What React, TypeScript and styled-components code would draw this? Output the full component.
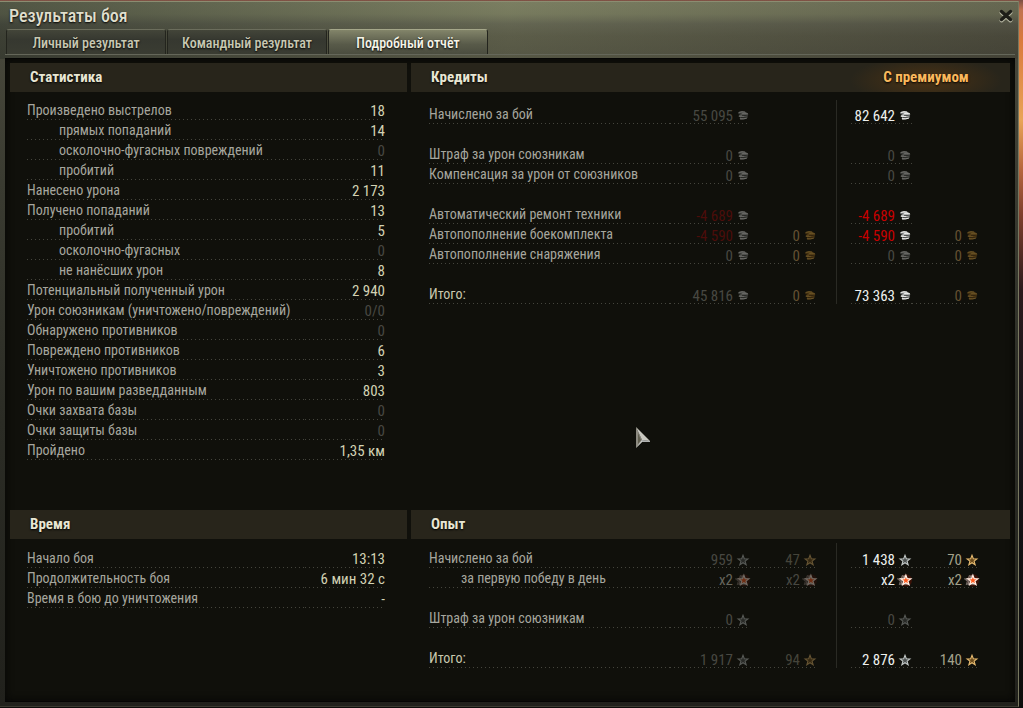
import React from 'react';
import styled, { createGlobalStyle, css } from 'styled-components';

const GlobalStyle = createGlobalStyle`
  * { box-sizing: border-box; }
  body {
    margin: 0;
    background: linear-gradient(180deg, #7b5044 0, #c07350 10px, #d97a3d 40px, #e9a457 120px, #b5653c 170px, #7d3f2c 215px, #2b1a1c 290px, #17151a 420px, #0d0d0b 100%);
    font-family: "Roboto Condensed", "Liberation Sans Narrow", "Roboto", sans-serif;
    font-size: 15px;
    color: #a3a39b;
  }
  h1, h2 { margin: 0; }
`;

const Window = styled.main`
  position: relative;
  display: flex;
  flex-direction: column;
  min-height: calc(100vh - 2px);
  margin: 1px 4px 1px 0;
  padding: 0 3px 4px 5px;
  border-top: 1px solid #8b8d71;
  border-right: 1px solid #77775f;
  border-bottom: 1px solid #3b3b31;
  background:
    linear-gradient(90deg, rgba(40, 46, 38, 0.45) 0, rgba(150, 155, 112, 0.2) 50%, rgba(60, 56, 44, 0.25) 100%) 0 0 / 100% 57px no-repeat,
    linear-gradient(180deg, #74775e 0, #6f7259 12px, #57584a 22px, #4d4d3f 34px, #46463a 56px, #3a3b31 180px, #2b2c25 420px, #21211c 100%);
`;

const TitleBar = styled.header`
  display: flex;
  align-items: center;
  justify-content: space-between;
  height: 27px;
  padding: 0 1px 0 4px;
`;

const Title = styled.h1`
  font-size: 18px;
  line-height: 28px;
  font-weight: 500;
  color: #e0dfcd;
  text-shadow: 0 1px 2px #000;
`;

const CloseButton = styled.button`
  display: flex;
  padding: 0;
  border: 0;
  background: none;
  cursor: pointer;
`;

const Tabs = styled.div`
  display: flex;
  gap: 1px;
  height: 26px;
  padding-left: 1px;
  border-bottom: 1px solid #65675a;
`;

const Tab = styled.button<{ $active?: boolean }>`
  width: 160px;
  height: 25px;
  padding: 2px 0 0;
  border: 1px solid #23241d;
  border-top-color: #6b6d5c;
  border-bottom: 0;
  border-radius: 3px 3px 0 0;
  font: inherit;
  font-size: 14px;
  font-weight: 500;
  color: #c8c8b2;
  text-shadow: 0 1px 2px #000;
  background: linear-gradient(180deg, #434539 0, #363830 40%, #3a3c32 100%);
  ${(p) => p.$active && css`
    color: #f6f5e8;
    border-top-color: #a5a78a;
    background: linear-gradient(180deg, #83856a 0, #7b7d64 10%, #585a49 60%, #4b4d3f 100%);
  `}
`;

const Report = styled.div`
  display: grid;
  flex: 1;
  grid-template-columns: minmax(0, 397fr) minmax(0, 599fr);
  grid-template-rows: auto 1fr;
  gap: 50px 4px;
  margin-top: 3px;
  padding: 4px 5px;
  border: 1px solid #050504;
  border-width: 1px 0 1px 0;
  background: #10100b;
  box-shadow: inset 0 0 8px #050504;
`;

const Section = styled.section`
  min-width: 0;
`;

const SectionHeader = styled.div`
  display: flex;
  justify-content: space-between;
  height: 29px;
  padding-left: 20px;
  background: #28251b;
`;

const SectionTitle = styled.h2`
  font-size: 15px;
  line-height: 28px;
  font-weight: 700;
  color: #e8e6d3;
  text-shadow: 0 1px 2px #000;
`;

const PremiumTitle = styled.strong`
  width: 168px;
  font-size: 15px;
  line-height: 28px;
  text-align: center;
  color: #fbb95c;
  text-shadow: 0 1px 2px #000;
  background: radial-gradient(ellipse 76px 24px at 50% 60%, #4a3214 0, rgba(74, 50, 20, 0) 100%);
`;

const StatBody = styled.div<{ $top: number }>`
  padding: ${(p) => p.$top}px 22px 0 17px;
`;

const IncomeBody = styled.div<{ $top: number }>`
  padding: ${(p) => p.$top}px 31px 0 18px;
`;

const Table = styled.table`
  width: 100%;
  border-collapse: collapse;
  table-layout: fixed;
`;

const dots = css`
  background: linear-gradient(90deg, #45453d 1px, transparent 1px) 0 100% / 4px 1px repeat-x;
`;

const Row = styled.tr<{ $height?: number }>`
  height: ${(p) => p.$height ?? 20}px;
`;

const Label = styled.th<{ $indent?: boolean; $total?: boolean }>`
  ${dots}
  padding: 0 0 1px ${(p) => (p.$indent ? 32 : 0)}px;
  font-size: 14px;
  line-height: 18px;
  font-weight: 400;
  text-align: left;
  vertical-align: bottom;
  white-space: nowrap;
  color: ${(p) => (p.$total ? '#c9c8ae' : '#a6a69e')};
`;

const tones = {
  cream: '#d3d2b3',
  off: '#484842',
  white: '#eef0ee',
  red: '#c80000',
  redOff: '#4c0d0a',
  goldOff: '#645031',
  goldFaint: '#45443a',
  bonusOff: '#66665d',
  gold: '#a3a18a',
};
type Tone = keyof typeof tones;

const Value = styled.td<{ $tone: Tone; $low?: boolean }>`
  ${dots}
  padding: 0;
  line-height: ${(p) => (p.$low ? 16 : 18)}px;
  text-align: right;
  vertical-align: bottom;
  white-space: nowrap;
  color: ${(p) => tones[p.$tone]};
`;

const Blank = styled.td`
  padding: 0;
`;

const Divider = styled.td`
  padding: 0;
  background: linear-gradient(#2a2a24, #2a2a24) 19px 0 / 1px 100% no-repeat;
`;

const Icon = styled.svg<{ $dim?: boolean }>`
  width: 14px;
  height: 14px;
  margin-left: 3px;
  vertical-align: -2px;
  overflow: visible;
  opacity: ${(p) => (p.$dim ? 0.4 : 1)};
`;

const Cursor = styled.svg`
  position: absolute;
  left: 636px;
  top: 425px;
  pointer-events: none;
`;

type IconKind = 'silver' | 'goldCoin' | 'star' | 'goldStar' | 'bonus';
const STAR = 'M8 1.6 9.5 5.5 13.7 5.7 10.4 8.3 11.6 12.4 8 10.1 4.4 12.4 5.6 8.3 2.3 5.7 6.5 5.5Z';

function Glyph({ kind, dim }: { kind: IconKind; dim?: boolean }) {
  if (kind === 'silver' || kind === 'goldCoin') {
    const gold = kind === 'goldCoin';
    const light = gold ? '#f0b850' : '#f4f4f2';
    const mid = gold ? '#b98228' : '#b4b7b6';
    return (
      <Icon viewBox="1 0 14 14" $dim={dim} aria-hidden="true">
        <path d="M3.4 3.2Q6.5 2 9.6 2.6L12.8 4.2Q13.8 5.6 12.6 6.8L12.4 8.8Q10.5 10.6 5.4 10.4L4.6 9.2 5.8 8 3.6 7.2 5 5.6 3.2 4.4Z" fill={mid} />
        <path d="M3.8 3.4Q7 2 10.2 3.2M6.4 5Q9.6 3.8 13 5.1M3.8 7.2Q6 7.6 9 7.2M5 9.8Q9 10.4 12 9" fill="none" stroke={light} strokeWidth="1" />
        <path d="M3.4 4.9H6.6M7 6.3Q10 6.9 13 6M5.8 8.5Q9 9 12.6 7.8" fill="none" stroke={gold ? '#5a380e' : '#3d3f3e'} strokeWidth="0.9" />
      </Icon>
    );
  }
  if (kind === 'bonus') {
    return (
      <Icon viewBox="0 -1 16 16" $dim={dim} aria-hidden="true">
        <circle cx="9" cy="7.5" r="7" fill="#a01800" opacity="0.3" />
        <path d={STAR} transform="translate(-3 0)" fill="#46302b" stroke="#8d8580" strokeWidth="0.8" />
        <path d={STAR} transform="translate(-1 0)" fill="#46302b" stroke="#b5aba5" strokeWidth="0.8" />
        <path d={STAR} transform="translate(1 0)" fill="#ff5a1e" stroke="#fff0e6" strokeWidth="1.4" />
      </Icon>
    );
  }
  return (
    <Icon viewBox="0 -1 16 16" $dim={dim} aria-hidden="true">
      <path d={STAR} fill={kind === 'star' ? '#4f5352' : '#6a4a1b'} stroke={kind === 'star' ? '#c3c9c8' : '#e9bd72'} strokeWidth="1.2" />
    </Icon>
  );
}

type Stat = [label: string, value: string, indent?: boolean];

const battleStats: Stat[] = [
  ['Произведено выстрелов', '18'],
  ['прямых попаданий', '14', true],
  ['осколочно-фугасных повреждений', '0', true],
  ['пробитий', '11', true],
  ['Нанесено урона', '2 173'],
  ['Получено попаданий', '13'],
  ['пробитий', '5', true],
  ['осколочно-фугасных', '0', true],
  ['не нанёсших урон', '8', true],
  ['Потенциальный полученный урон', '2 940'],
  ['Урон союзникам (уничтожено/повреждений)', '0/0'],
  ['Обнаружено противников', '0'],
  ['Повреждено противников', '6'],
  ['Уничтожено противников', '3'],
  ['Урон по вашим разведданным', '803'],
  ['Очки захвата базы', '0'],
  ['Очки защиты базы', '0'],
  ['Пройдено', '1,35 км'],
];

const timeStats: Stat[] = [
  ['Начало боя', '13:13'],
  ['Продолжительность боя', '6 мин 32 с'],
  ['Время в бою до уничтожения', '-'],
];

type Amount = { text: string; tone: Tone; icon: IconKind; dim?: boolean } | null;
type Income = { label: string; indent?: boolean; total?: boolean; cells: [Amount, Amount, Amount, Amount] } | null;

const amount = (text: string, tone: Tone, icon: IconKind, dim?: boolean): Amount => ({ text, tone, icon, dim });
const noSilver = amount('0', 'off', 'silver', true);
const noGold = amount('0', 'goldOff', 'goldCoin', true);

const credits: Income[] = [
  { label: 'Начислено за бой', cells: [amount('55 095', 'off', 'silver', true), null, amount('82 642', 'white', 'silver'), null] },
  null,
  { label: 'Штраф за урон союзникам', cells: [noSilver, null, noSilver, null] },
  { label: 'Компенсация за урон от союзников', cells: [noSilver, null, noSilver, null] },
  null,
  { label: 'Автоматический ремонт техники', cells: [amount('-4 689', 'redOff', 'silver', true), null, amount('-4 689', 'red', 'silver'), null] },
  { label: 'Автопополнение боекомплекта', cells: [amount('-4 590', 'redOff', 'silver', true), noGold, amount('-4 590', 'red', 'silver'), noGold] },
  { label: 'Автопополнение снаряжения', cells: [noSilver, noGold, noSilver, noGold] },
  null,
  { label: 'Итого:', total: true, cells: [amount('45 816', 'off', 'silver', true), noGold, amount('73 363', 'white', 'silver'), noGold] },
];

const experience: Income[] = [
  { label: 'Начислено за бой', cells: [amount('959', 'off', 'star', true), amount('47', 'goldFaint', 'goldStar', true), amount('1 438', 'white', 'star'), amount('70', 'gold', 'goldStar')] },
  { label: 'за первую победу в день', indent: true, cells: [amount('x2', 'bonusOff', 'bonus', true), amount('x2', 'off', 'bonus', true), amount('x2', 'white', 'bonus'), amount('x2', 'gold', 'bonus')] },
  null,
  { label: 'Штраф за урон союзникам', cells: [amount('0', 'off', 'star', true), null, amount('0', 'off', 'star', true), null] },
  null,
  { label: 'Итого:', total: true, cells: [amount('1 917', 'off', 'star', true), amount('94', 'goldFaint', 'goldStar', true), amount('2 876', 'white', 'star'), amount('140', 'gold', 'goldStar')] },
];

const StatValueCol = styled.col`
  width: 80px;
`;

const AmountCol = styled.col<{ $width: number }>`
  width: ${(p) => p.$width}px;
`;

function StatTable({ rows }: { rows: Stat[] }) {
  return (
    <Table>
      <colgroup>
        <col />
        <StatValueCol />
      </colgroup>
      <tbody>
        {rows.map(([label, value, indent], i) => (
          <Row key={i}>
            <Label scope="row" $indent={indent}>{label}</Label>
            <Value $tone={value === '0' || value === '0/0' ? 'off' : 'cream'}>{value}</Value>
          </Row>
        ))}
      </tbody>
    </Table>
  );
}

function AmountCell({ value }: { value: Amount }) {
  if (!value) return <Blank />;
  return (
    <Value $tone={value.tone} $low>
      {value.text}
      <Glyph kind={value.icon} dim={value.dim} />
    </Value>
  );
}

function IncomeTable({ rows, firstHeight }: { rows: Income[]; firstHeight: number }) {
  return (
    <Table>
      <colgroup>
        <col />
        {[80, 67, 34, 61, 67].map((width, i) => <AmountCol key={i} $width={width} />)}
      </colgroup>
      <tbody>
        {rows.map((row, i) => (
          <Row key={i} $height={i === 0 ? firstHeight : 20}>
            {row ? <Label scope="row" $indent={row.indent} $total={row.total}>{row.label}</Label> : <Blank />}
            <AmountCell value={row && row.cells[0]} />
            <AmountCell value={row && row.cells[1]} />
            {i === 0 && <Divider rowSpan={rows.length} />}
            <AmountCell value={row && row.cells[2]} />
            <AmountCell value={row && row.cells[3]} />
          </Row>
        ))}
      </tbody>
    </Table>
  );
}

export default function App() {
  return (
    <>
      <GlobalStyle />
      <Window>
        <TitleBar>
          <Title>Результаты боя</Title>
          <CloseButton aria-label="Закрыть">
            <svg width="16" height="16" viewBox="0 0 16 16">
              <path d="M3.5 4.5 12.5 12.5M12.5 4.5 3.5 12.5" stroke="#b4b4a0" strokeWidth="4" strokeLinecap="round" />
              <path d="M3.5 3.5 12.5 11.5M12.5 3.5 3.5 11.5" stroke="#1d1d18" strokeWidth="3.4" strokeLinecap="round" />
            </svg>
          </CloseButton>
        </TitleBar>
        <Tabs role="tablist">
          <Tab role="tab" aria-selected="false">Личный результат</Tab>
          <Tab role="tab" aria-selected="false">Командный результат</Tab>
          <Tab role="tab" aria-selected="true" $active>Подробный отчёт</Tab>
        </Tabs>
        <Report>
          <Section>
            <SectionHeader><SectionTitle>Статистика</SectionTitle></SectionHeader>
            <StatBody $top={8}><StatTable rows={battleStats} /></StatBody>
          </Section>
          <Section>
            <SectionHeader>
              <SectionTitle>Кредиты</SectionTitle>
              <PremiumTitle>С премиумом</PremiumTitle>
            </SectionHeader>
            <IncomeBody $top={8}><IncomeTable rows={credits} firstHeight={24} /></IncomeBody>
          </Section>
          <Section>
            <SectionHeader><SectionTitle>Время</SectionTitle></SectionHeader>
            <StatBody $top={9}><StatTable rows={timeStats} /></StatBody>
          </Section>
          <Section>
            <SectionHeader><SectionTitle>Опыт</SectionTitle></SectionHeader>
            <IncomeBody $top={4}><IncomeTable rows={experience} firstHeight={25} /></IncomeBody>
          </Section>
        </Report>
        <Cursor width="14" height="22" viewBox="0 0 14 22" aria-hidden="true">
          <path d="M0 0 0 21 6 15 6 13Z" fill="#8c8a80" />
          <path d="M0 0 14 14 6 13Z" fill="#c9c8c0" />
          <path d="M0 21 6 15 14 15 14 14 6 13Z" fill="#e6e8ea" opacity="0.75" />
          <path d="M2 6 2 17 5 13Z" fill="#615f50" />
        </Cursor>
      </Window>
    </>
  );
}
